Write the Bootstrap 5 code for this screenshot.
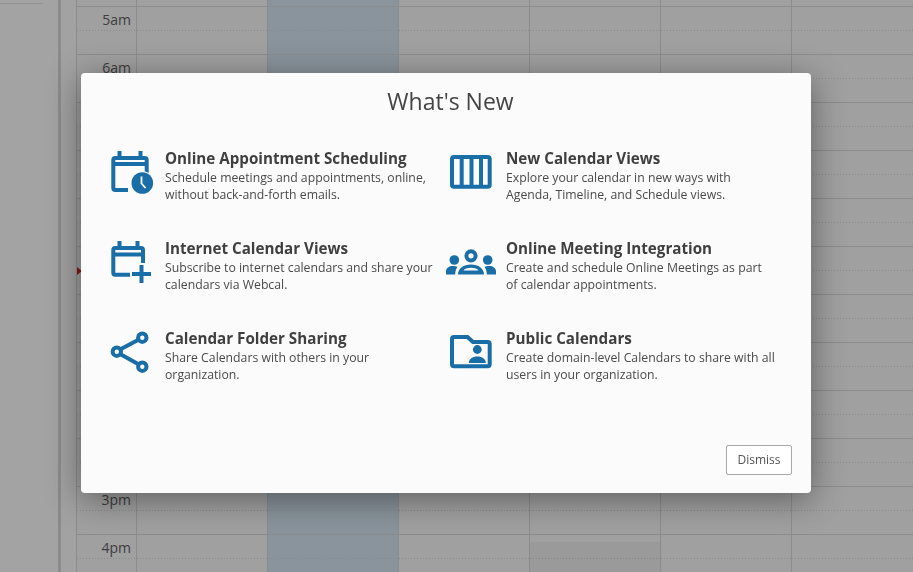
<!DOCTYPE html>
<html lang="en">
<head>
<meta charset="utf-8">
<title>What's New</title>
<link href="https://cdn.jsdelivr.net/npm/bootstrap@5.3.0/dist/css/bootstrap.min.css" rel="stylesheet">
<style>
html,body{height:100%;overflow:hidden;}
body{background:#a0a0a0;font-family:"Open Sans","Noto Sans",sans-serif;}
.cal-shell{height:572px;overflow:hidden;}
.side-pane{width:58px;background:#a3a3a3;flex:none;}
.side-rule{height:1px;width:43px;margin-top:3px;background:#929292;}
.side-rail{width:3px;background:#8b8b8b;flex:none;}
.side-gap{width:16px;background:#a2a2a2;border-right:1px solid #8c8c8c;flex:none;}
.cal-grid{flex:1 1 auto;min-width:0;position:relative;}
.hour-row{display:flex;height:48px;border-top:1px solid #8c8c8c;}
.hour-stub{height:6px;border-top:0;}
.time-cell{width:59px;flex:none;text-align:right;padding:3px 5px 0 0;font-size:14px;line-height:20px;color:#3d3d3d;}
.day-cell{width:131px;flex:none;border-left:1px solid #8c8c8c;}
.day-end{flex:1 1 auto;width:auto;}
.day-blue{background-color:#8a949c;}
.hour-row>div{background-image:linear-gradient(to right,#8a8a8a 1px,transparent 1px);background-size:3px 1px;background-position:0 23px;background-repeat:repeat-x;}
.hour-stub>div{background-image:none!important;}
.booked-fill{height:41px;margin-top:7px;background:rgba(0,0,0,.035);}
.now-arrow{position:absolute;left:0;top:267px;width:0;height:0;border-style:solid;border-width:4px 0 4px 5px;border-color:transparent transparent transparent #8a1414;}
.dialog-layer{position:fixed;inset:0;padding:73px 102px 79px 81px;}
.news-dialog{width:730px;height:420px;background:#fbfbfb;border:0;border-radius:4px;box-shadow:0 6px 34px rgba(0,0,0,.42);}
.news-title{font-size:23px;line-height:32px;font-weight:400;color:#444;text-align:center;margin:12px 0 28px 9px;}
.news-grid{display:grid;grid-template-columns:338px 338px;grid-auto-rows:90px;padding-left:27px;}
.news-item{display:flex;align-items:flex-start;}
.news-icon{flex:none;width:54px;height:50px;display:block;}
.news-item:nth-child(even) .news-icon{margin-right:6px;}
.news-item:nth-child(odd) .news-icon{margin-right:3px;}
.news-text{width:270px;padding-top:3px;}
.news-head{font-size:15.2px;line-height:20px;font-weight:700;color:#3f3f3f;margin:0;}
.news-desc{font-size:12.25px;line-height:17px;color:#4a4a4a;margin:1px 0 0;}
.ic-s{fill:none;stroke:#1a6ea8;stroke-width:4;}
.ic-f{fill:#1a6ea8;}
.news-foot{padding:0 19px 18px 0;}
.btn-dismiss{width:66px;height:30px;padding:0;font-size:12px;line-height:28px;color:#555;background:#fff;border:1px solid #a8a8a8;border-radius:2px;}
</style>
</head>
<body>
<div class="cal-shell d-flex">
  <div class="side-pane"><div class="side-rule"></div></div>
  <div class="side-rail"></div>
  <div class="side-gap"></div>
  <div class="cal-grid">
    <div class="hour-row hour-stub"><div class="time-cell"></div><div class="day-cell"></div><div class="day-cell day-blue"></div><div class="day-cell"></div><div class="day-cell"></div><div class="day-cell"></div><div class="day-cell day-end"></div></div>
    <div class="hour-row"><div class="time-cell">5am</div><div class="day-cell"></div><div class="day-cell day-blue"></div><div class="day-cell"></div><div class="day-cell"></div><div class="day-cell"></div><div class="day-cell day-end"></div></div>
    <div class="hour-row"><div class="time-cell">6am</div><div class="day-cell"></div><div class="day-cell day-blue"></div><div class="day-cell"></div><div class="day-cell"></div><div class="day-cell"></div><div class="day-cell day-end"></div></div>
    <div class="hour-row"><div class="time-cell">7am</div><div class="day-cell"></div><div class="day-cell day-blue"></div><div class="day-cell"></div><div class="day-cell"></div><div class="day-cell"></div><div class="day-cell day-end"></div></div>
    <div class="hour-row"><div class="time-cell">8am</div><div class="day-cell"></div><div class="day-cell day-blue"></div><div class="day-cell"></div><div class="day-cell"></div><div class="day-cell"></div><div class="day-cell day-end"></div></div>
    <div class="hour-row"><div class="time-cell">9am</div><div class="day-cell"></div><div class="day-cell day-blue"></div><div class="day-cell"></div><div class="day-cell"></div><div class="day-cell"></div><div class="day-cell day-end"></div></div>
    <div class="hour-row"><div class="time-cell">10am</div><div class="day-cell"></div><div class="day-cell day-blue"></div><div class="day-cell"></div><div class="day-cell"></div><div class="day-cell"></div><div class="day-cell day-end"></div></div>
    <div class="hour-row"><div class="time-cell">11am</div><div class="day-cell"></div><div class="day-cell day-blue"></div><div class="day-cell"></div><div class="day-cell"></div><div class="day-cell"></div><div class="day-cell day-end"></div></div>
    <div class="hour-row"><div class="time-cell">12pm</div><div class="day-cell"></div><div class="day-cell day-blue"></div><div class="day-cell"></div><div class="day-cell"></div><div class="day-cell"></div><div class="day-cell day-end"></div></div>
    <div class="hour-row"><div class="time-cell">1pm</div><div class="day-cell"></div><div class="day-cell day-blue"></div><div class="day-cell"></div><div class="day-cell"></div><div class="day-cell"></div><div class="day-cell day-end"></div></div>
    <div class="hour-row"><div class="time-cell">2pm</div><div class="day-cell"></div><div class="day-cell day-blue"></div><div class="day-cell"></div><div class="day-cell"></div><div class="day-cell"></div><div class="day-cell day-end"></div></div>
    <div class="hour-row"><div class="time-cell">3pm</div><div class="day-cell"></div><div class="day-cell day-blue"></div><div class="day-cell"></div><div class="day-cell"></div><div class="day-cell"></div><div class="day-cell day-end"></div></div>
    <div class="hour-row"><div class="time-cell">4pm</div><div class="day-cell"></div><div class="day-cell day-blue"></div><div class="day-cell"></div><div class="day-cell"><div class="booked-fill"></div></div><div class="day-cell"></div><div class="day-cell day-end"></div></div>
    <div class="now-arrow"></div>
  </div>
</div>

<div class="dialog-layer">
  <div class="modal-content news-dialog d-flex flex-column">
    <h4 class="news-title">What's New</h4>
    <div class="news-grid flex-grow-1">
      <div class="news-item">
        <svg class="news-icon" viewBox="108 145 54 50" aria-hidden="true">
          <path class="ic-s" d="M128 190H115.300a2 2 0 0 1-2-2V160a2 2 0 0 1 2-2H144.700a2 2 0 0 1 2 2V173M113.300 164H146.700M119.500 151V160M140.500 151V160"/>
          <circle cx="142" cy="183" r="12" fill="#fbfbfb"/>
          <circle class="ic-f" cx="142.300" cy="183" r="10.800"/>
          <path d="M141.500 176.500v7l4 4.500" fill="none" stroke="#fbfbfb" stroke-width="1.800"/>
        </svg>
        <div class="news-text">
          <p class="news-head">Online Appointment Scheduling</p>
          <p class="news-desc">Schedule meetings and appointments, online, without back-and-forth emails.</p>
        </div>
      </div>
      <div class="news-item">
        <svg class="news-icon" viewBox="446 145 54 50" aria-hidden="true">
          <rect class="ic-s" x="452" y="157" width="37.700" height="29.700" rx="2"/>
          <path class="ic-s" d="M461.700 157v30M471.500 157v30M481 157v30"/>
        </svg>
        <div class="news-text">
          <p class="news-head">New Calendar Views</p>
          <p class="news-desc">Explore your calendar in new ways with Agenda, Timeline, and Schedule views.</p>
        </div>
      </div>
      <div class="news-item">
        <svg class="news-icon" viewBox="108 235 54 50" aria-hidden="true">
          <path class="ic-s" d="M130 274.700H115.300a2 2 0 0 1-2-2V250a2 2 0 0 1 2-2H141a2 2 0 0 1 2 2V263M113.300 254.500H143M119.500 241V250M137.500 241V250"/>
          <path class="ic-s" d="M132 274H151M141.500 265V283"/>
        </svg>
        <div class="news-text">
          <p class="news-head">Internet Calendar Views</p>
          <p class="news-desc">Subscribe to internet calendars and share your calendars via Webcal.</p>
        </div>
      </div>
      <div class="news-item">
        <svg class="news-icon" viewBox="446 235 54 50" aria-hidden="true">
          <circle class="ic-s" cx="471" cy="255.800" r="4.600"/>
          <circle class="ic-f" cx="454.300" cy="260" r="4.800"/>
          <circle class="ic-f" cx="487.700" cy="260" r="4.800"/>
          <path class="ic-f" d="M446 274.500v-3c0-3.500 3-5.500 7-5.500 1.800 0 3.200.3 4.400 1-1.300 1.800-2.200 4.500-2.200 7.500zM496 274.500v-3c0-3.500-3-5.500-7-5.500-1.800 0-3.200.3-4.400 1 1.300 1.800 2.200 4.500 2.200 7.500z"/>
          <path class="ic-f" fill-rule="evenodd" d="M458 274.500c0-6 5.500-10 13-10s13 4 13 10zM463.500 270.500h15c-1-1.800-4-2.800-7.500-2.800s-6.500 1-7.500 2.800z"/>
        </svg>
        <div class="news-text">
          <p class="news-head">Online Meeting Integration</p>
          <p class="news-desc">Create and schedule Online Meetings as part of calendar appointments.</p>
        </div>
      </div>
      <div class="news-item">
        <svg class="news-icon" viewBox="108 325 54 50" aria-hidden="true">
          <path class="ic-s" d="M120.500 349.300l18-9.600M120.500 354.200l18 10"/>
          <circle class="ic-s" cx="116.800" cy="351.700" r="4.200"/>
          <circle class="ic-s" cx="142.300" cy="337.700" r="4.200"/>
          <circle class="ic-s" cx="142.300" cy="366.700" r="4.200"/>
        </svg>
        <div class="news-text">
          <p class="news-head">Calendar Folder Sharing</p>
          <p class="news-desc">Share Calendars with others in your organization.</p>
        </div>
      </div>
      <div class="news-item">
        <svg class="news-icon" viewBox="446 325 54 50" aria-hidden="true">
          <path class="ic-s" d="M454 337H467.500L473 342H487.700a2 2 0 0 1 2 2V364.300a2 2 0 0 1-2 2H454a2 2 0 0 1-2-2V339a2 2 0 0 1 2-2z"/>
          <circle class="ic-f" cx="477.300" cy="349.500" r="4.400"/>
          <path class="ic-f" d="M468.800 363c0-4 3.500-6.500 8.500-6.500s8.500 2.500 8.500 6.500z"/>
        </svg>
        <div class="news-text">
          <p class="news-head">Public Calendars</p>
          <p class="news-desc">Create domain-level Calendars to share with all users in your organization.</p>
        </div>
      </div>
    </div>
    <div class="news-foot d-flex justify-content-end">
      <button type="button" class="btn btn-dismiss">Dismiss</button>
    </div>
  </div>
</div>
<script src="https://cdn.jsdelivr.net/npm/bootstrap@5.3.0/dist/js/bootstrap.bundle.min.js"></script>
</body>
</html>
